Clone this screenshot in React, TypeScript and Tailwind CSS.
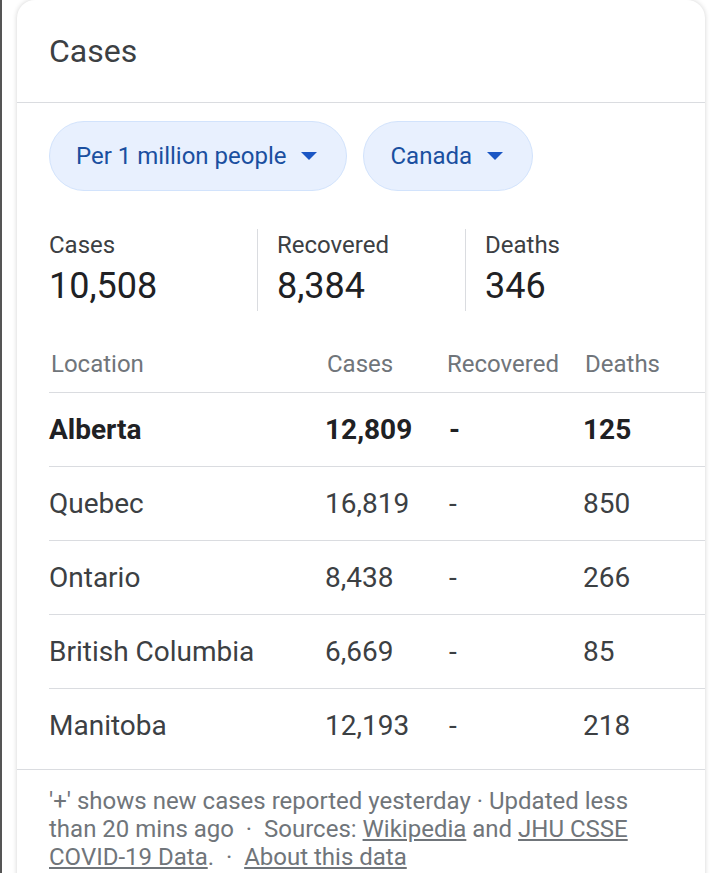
import React from 'react';

const rows = [
  { name: 'Alberta', cases: '12,809', recovered: '-', deaths: '125', bold: true },
  { name: 'Quebec', cases: '16,819', recovered: '-', deaths: '850' },
  { name: 'Ontario', cases: '8,438', recovered: '-', deaths: '266' },
  { name: 'British Columbia', cases: '6,669', recovered: '-', deaths: '85' },
  { name: 'Manitoba', cases: '12,193', recovered: '-', deaths: '218' },
];

const stats = [
  { label: 'Cases', value: '10,508' },
  { label: 'Recovered', value: '8,384' },
  { label: 'Deaths', value: '346' },
];

const Caret = () => (
  <svg width="16" height="8" viewBox="0 0 16 8" className="ml-[15px] shrink-0">
    <path d="M0 0 L16 0 L8 8 Z" fill="#1a56c4" />
  </svg>
);

const Pill: React.FC<{ label: string }> = ({ label }) => (
  <button className="h-[70px] rounded-full border border-[#d2e3fc] bg-[#e8f0fe] pl-[26px] pr-[29px] flex items-center text-[24px] text-[#1a4fa0]">
    {label}
    <Caret />
  </button>
);

export default function App() {
  return (
    <div className="min-h-[873px] bg-white border-l-2 border-[#555] pl-[15px] overflow-hidden" style={{ fontFamily: 'Roboto, "Liberation Sans", sans-serif' }}>
      <div className="w-[688px] rounded-t-[18px] bg-white shadow-[0_0_5px_rgba(0,0,0,0.18)] pb-4">
        {/* Header */}
        <div className="h-[103px] flex items-center pl-8 border-b border-[#dadce0]">
          <h1 className="text-[32px] text-[#3c4043] leading-none">Cases</h1>
        </div>

        {/* Filters */}
        <div className="flex gap-4 pl-8 mt-[18px]">
          <Pill label="Per 1 million people" />
          <Pill label="Canada" />
        </div>

        {/* Totals */}
        <div className="flex pl-8 mt-[38px]">
          {stats.map((s, i) => (
            <div
              key={s.label}
              className={`w-[208px] h-[82px] ${i > 0 ? 'border-l border-[#dadce0] pl-[19px]' : ''}`}
            >
              <div className="text-[24px] text-[#3c4043] leading-[30px] mt-[1px]">{s.label}</div>
              <div className="text-[36px] text-[#202124] leading-[44px] mt-[4px]">{s.value}</div>
            </div>
          ))}
        </div>

        {/* Table */}
        <div className="ml-8 mt-[34px]">
          <div className="flex h-[48px] pb-[10px] items-center border-b border-[#dadce0] text-[24px] text-[#70757a]">
            <div className="w-[276px] pl-[2px]">Location</div>
            <div className="w-[122px] pl-[2px]">Cases</div>
            <div className="w-[138px]">Recovered</div>
            <div className="flex-1">Deaths</div>
          </div>
          {rows.map((r) => (
            <div
              key={r.name}
              className={`flex h-[74px] items-center border-b border-[#dadce0] last:border-b-0 text-[28px] text-[#3c4043] ${r.bold ? 'font-bold text-[#202124]' : ''}`}
            >
              <div className="w-[276px]">{r.name}</div>
              <div className="w-[122px]">{r.cases}</div>
              <div className="w-[136px] pl-[2px]">{r.recovered}</div>
              <div className="flex-1">{r.deaths}</div>
            </div>
          ))}
        </div>

        {/* Footer */}
        <div className="border-t border-[#dadce0] mt-[6px] pl-8 pr-[40px] pt-[17px] text-[24px] leading-[28px] text-[#70757a]">
          '+' shows new cases reported yesterday · Updated less than 20 mins ago &nbsp;·&nbsp; Sources:{' '}
          <a className="underline underline-offset-2">Wikipedia</a> and{' '}
          <a className="underline underline-offset-2">JHU CSSE COVID-19 Data</a>. &nbsp;·&nbsp;{' '}
          <a className="underline underline-offset-2">About this data</a>
        </div>
      </div>
    </div>
  );
}
